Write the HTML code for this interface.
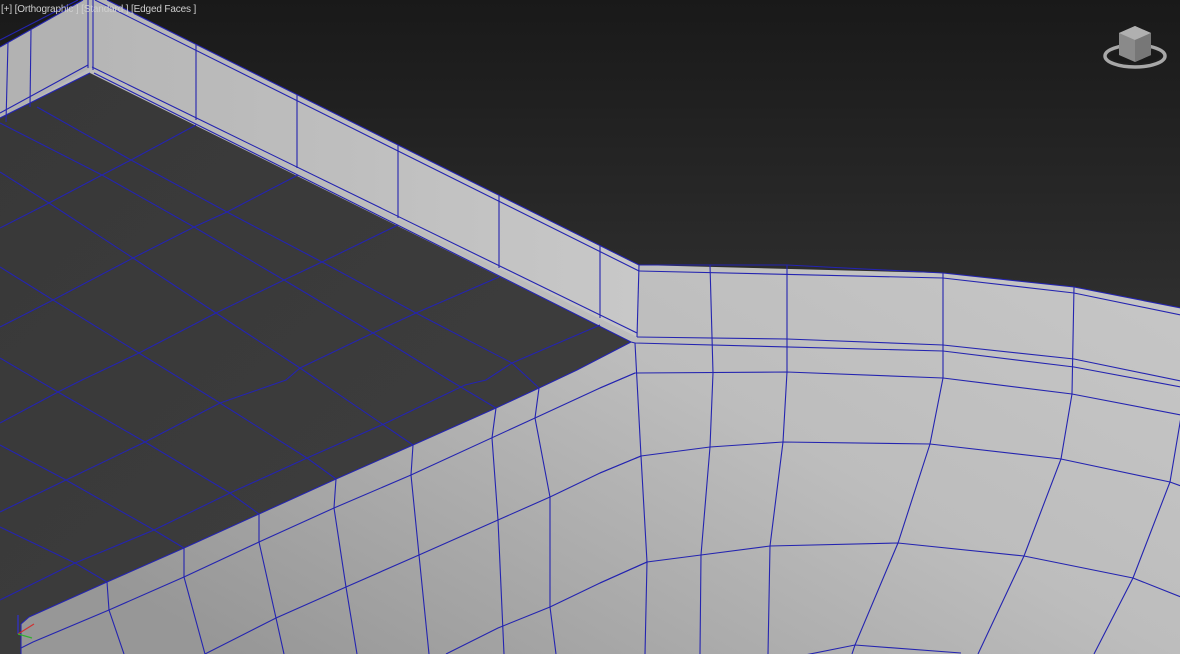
<!DOCTYPE html>
<html><head><meta charset="utf-8"><style>
html,body{margin:0;padding:0;background:#1c1c1c;}
svg{display:block}
</style></head><body>
<svg width="1180" height="654" viewBox="0 0 1180 654" xmlns="http://www.w3.org/2000/svg">
<defs>
<linearGradient id="bg" x1="0" y1="0" x2="0" y2="1">
<stop offset="0" stop-color="#191919"/><stop offset="0.5" stop-color="#303030"/><stop offset="1" stop-color="#3a3a3a"/></linearGradient>
<linearGradient id="lt" x1="1" y1="0.2" x2="0.2" y2="1">
<stop offset="0" stop-color="#cacaca"/><stop offset="0.5" stop-color="#bdbdbd"/><stop offset="1" stop-color="#979797"/></linearGradient>
<linearGradient id="wall" x1="0" y1="0" x2="1" y2="0">
<stop offset="0" stop-color="#b6b6b6"/><stop offset="1" stop-color="#c8c8c8"/></linearGradient>
<linearGradient id="fl" x1="0" y1="0" x2="1" y2="1">
<stop offset="0" stop-color="#383838"/><stop offset="1" stop-color="#3e3e3e"/></linearGradient>
</defs>
<rect width="1180" height="654" fill="url(#bg)"/>
<polygon points="0,47 83,0 107,0 639,265 943,273 1074,287 1180,308 1180,654 0,654" fill="url(#lt)"/>
<polygon points="92,0 107,0 639,265 637,337 92,67" fill="url(#wall)"/>
<polygon points="0,47 83,0 92,0 92,67 0,118" fill="#b2b2b2"/>
<polygon points="0,118 90,73 631,342 577,370 539,388 496,408 413,445 336,479 259,514 184,548 107,582 29,617 21,624 21,654 0,654" fill="url(#fl)"/>
<g fill="none" stroke="#2424b0" stroke-width="1.1">
<polyline points="0,40 78,0"/><polyline points="0,47 83,0"/>
<line x1="8" y1="42" x2="6" y2="122"/><line x1="31" y1="30" x2="30" y2="107"/>
<line x1="88" y1="0" x2="88" y2="68"/><line x1="93" y1="0" x2="93" y2="70"/>
<polyline points="0,113 88,65"/><polyline points="0,118 90,73"/>
<line x1="107" y1="0" x2="639" y2="265"/><line x1="95" y1="0" x2="639" y2="271"/>
<line x1="92" y1="67" x2="637" y2="333"/><line x1="94" y1="73" x2="631" y2="342"/>
<line x1="196" y1="44" x2="196" y2="120"/><line x1="297" y1="95" x2="297" y2="168"/>
<line x1="398" y1="145" x2="398" y2="218"/><line x1="499" y1="195" x2="499" y2="268"/>
<line x1="600" y1="245" x2="600" y2="318"/>
<line x1="639" y1="265" x2="637" y2="337"/>
<polyline points="639,265 710,265 787,265 943,273 1074,287 1181,308"/>
<polyline points="639,271 943,278 1074,293 1181,315"/>
<polyline points="637,337 787,339 943,345 1074,359 1181,381"/>
<polyline points="631,342 635,343 943,351 1074,367 1181,387"/>
<polyline points="600,388 635,373 787,372 943,378 1072,394 1181,415"/>
<polyline points="600,473 641,456 710,447 783,442 930,444 1061,459 1170,482 1181,486"/>
<polyline points="600,583 647,562 701,555 770,546 898,543 1024,556 1133,578 1181,597"/>
<polyline points="780,660 855,645 961,653"/>
<polyline points="635,343 641,456 647,562 645,654"/>
<polyline points="710,265 713,373 710,447 701,555 700,654"/>
<polyline points="787,265 787,372 783,442 770,546 768,654"/>
<polyline points="943,273 943,378 930,444 898,543 855,645 852,654"/>
<polyline points="1074,287 1072,394 1061,459 1024,556 978,654"/>
<polyline points="1181,417 1170,482 1133,578 1094,654"/>
<polyline points="631,342 577,370 539,388 496,408 413,445 336,479 259,514 184,548 107,582 29,617 21,624"/>
<polyline points="539,388 535,418 550,497 550,607 556,654"/>
<polyline points="496,408 492,438 498,520 504,654"/>
<polyline points="413,445 411,475 419,555 429,654"/>
<polyline points="336,479 334,508 346,587 357,654"/>
<polyline points="259,514 259,542 276,618 284,654"/>
<polyline points="184,548 184,577 205,654"/>
<polyline points="107,582 109,610 124,654"/>
<polyline points="21,624 21,654"/>
<polyline points="635,373 600,388 535,418 411,475 334,508 259,542 184,577 109,610 33,642 21,648"/>
<polyline points="641,456 600,473 550,497 498,520 419,555 346,587 276,618 205,654"/>
<polyline points="647,562 600,583 550,607 498,628 446,654"/>
<polyline points="37,107 131,160 227,212 322,262 416,313 512,363 539,388"/>
<polyline points="0,123 102,175 194,227 284,280 373,333 449,380 496,408"/>
<polyline points="0,172 49,203 133,258 216,313 300,368 413,445"/>
<polyline points="0,267 53,300 139,353 220,403 307,458 336,479"/>
<polyline points="0,358 58,392 145,442 230,493 259,514"/>
<polyline points="0,445 66,480 154,530 184,548"/>
<polyline points="0,527 75,563 107,582"/>
<polyline points="0,228 49,203 102,175 131,160 196,125"/>
<polyline points="0,327 53,300 133,258 194,227 227,212 298,175"/>
<polyline points="0,423 58,392 82,380 139,353 216,313 284,280 322,262 398,225"/>
<polyline points="0,512 66,480 145,442 220,403 286,380 300,368 373,333 416,313 499,277"/>
<polyline points="0,600 75,563 154,530 230,493 307,458 386,423 465,385 486,380 512,363 600,325"/>
</g>
<g stroke-width="1.2">
<line x1="18" y1="634" x2="18" y2="615" stroke="#3030d0"/>
<line x1="18" y1="634" x2="34" y2="624" stroke="#d03030"/>
<line x1="18" y1="634" x2="32" y2="638" stroke="#30b030"/>
</g>
<ellipse cx="1135" cy="56" rx="30" ry="11" fill="none" stroke="#a8a8a8" stroke-width="3.5"/>
<ellipse cx="1135" cy="56" rx="25" ry="7" fill="#1a1a1a"/>
<polygon points="1135,26 1151,33 1151,55 1135,62 1119,55 1119,33" fill="#8a8a8a"/>
<polygon points="1135,26 1151,33 1135,40 1119,33" fill="#b0b0b0"/>
<polygon points="1135,40 1151,33 1151,55 1135,62" fill="#777"/>
<text x="1" y="12" font-family="Liberation Sans, sans-serif" font-size="10" letter-spacing="-0.15" fill="#cfcfcf">[+] [Orthographic ] [Standard ] [Edged Faces ]</text>
</svg>
</body></html>
